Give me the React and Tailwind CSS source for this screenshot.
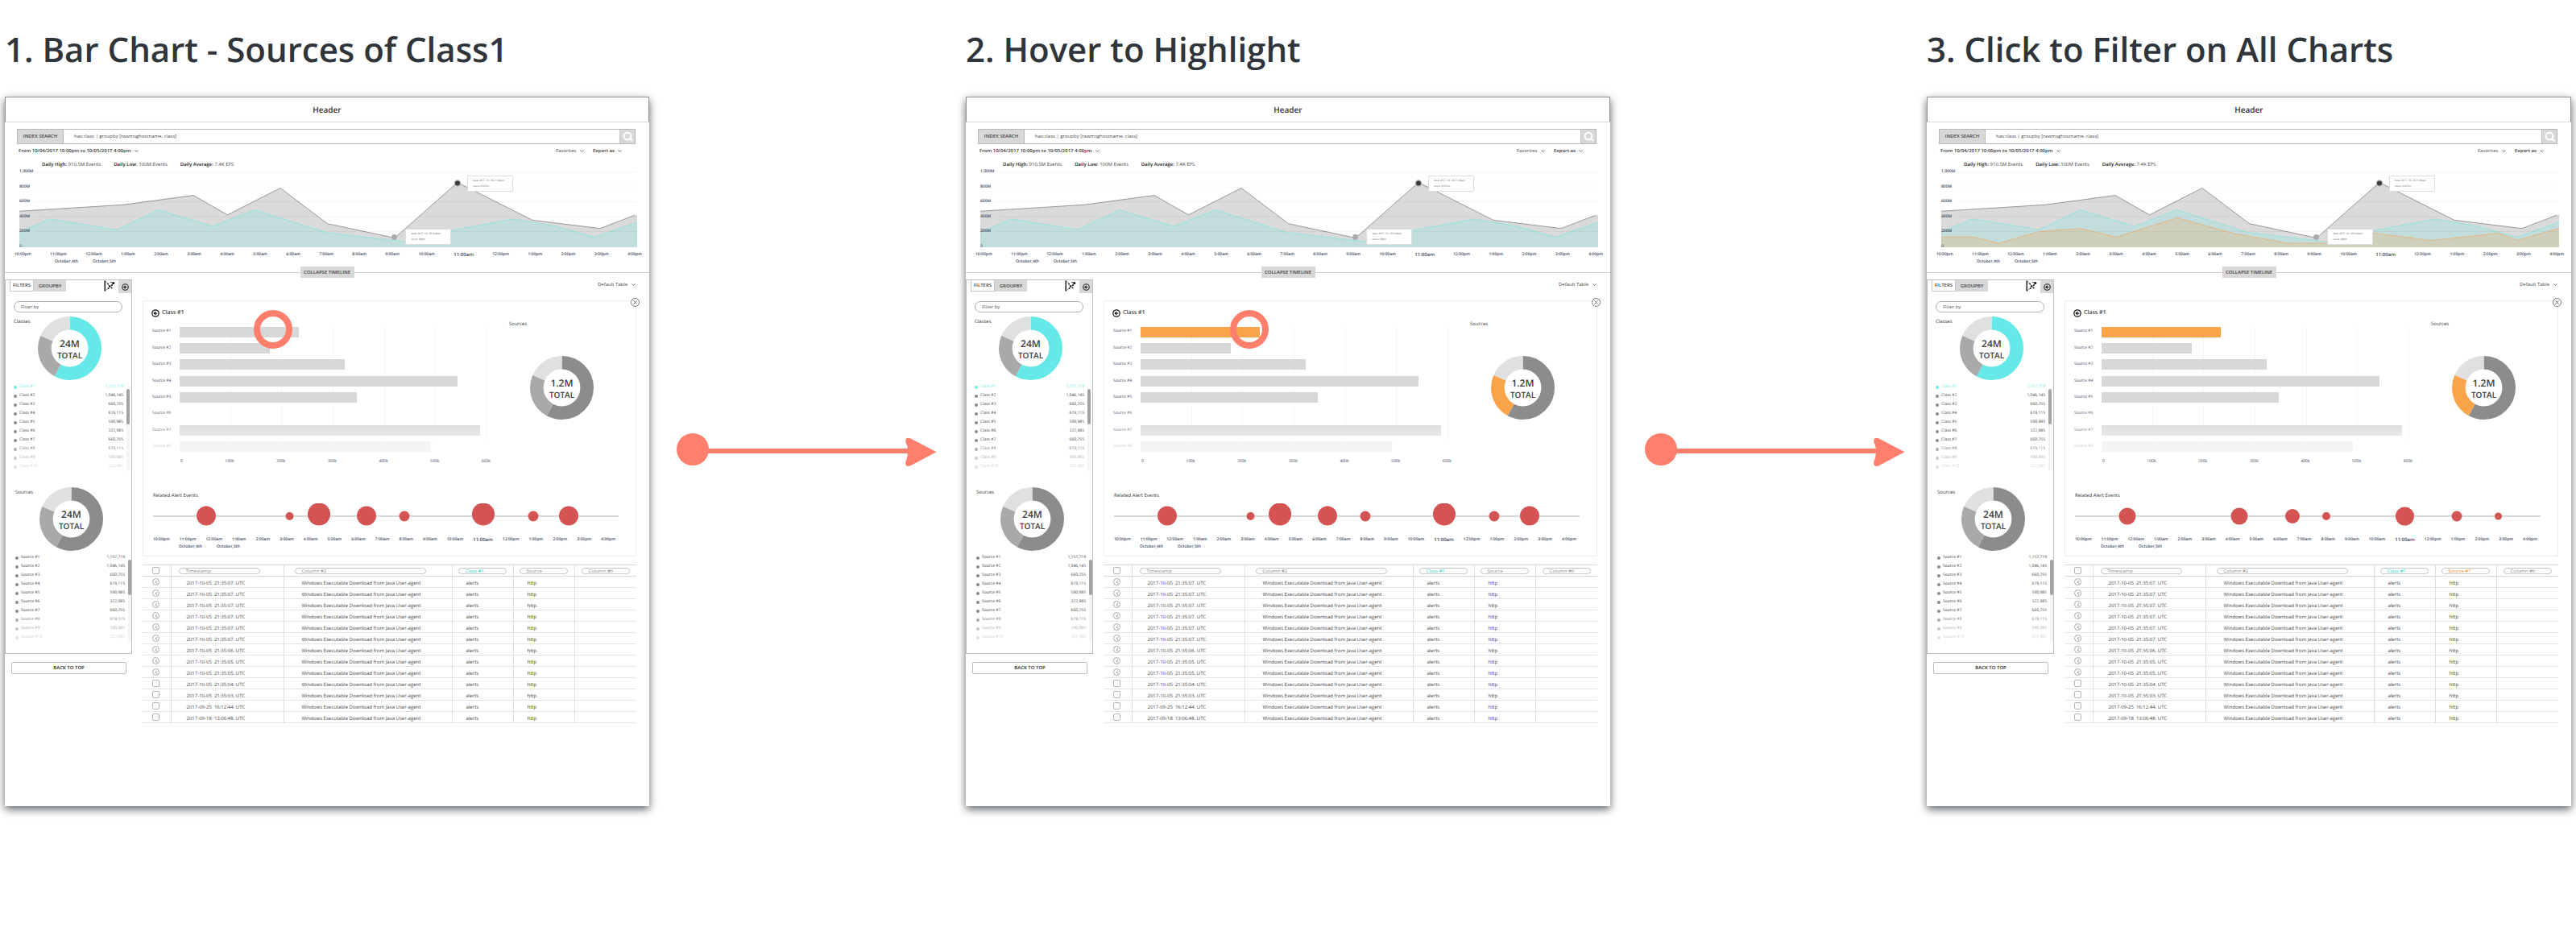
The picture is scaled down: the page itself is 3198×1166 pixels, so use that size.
import React from "react";
import { ChevronDown, ChevronLeft, CircleArrowLeft, Search, X } from "lucide-react";

const CYAN = "#64e9e8";
const ORANGE = "#f9a44a";

const HOURS = [
  "10:00pm", "11:00pm", "12:00am", "1:00am", "2:00am", "3:00am", "4:00am", "5:00am", "6:00am", "7:00am",
  "8:00am", "9:00am", "10:00am", "11:00am", "12:00pm", "1:00pm", "2:00pm", "3:00pm", "4:00pm",
];

const COUNTS = ["1,157,719", "1,046,145", "660,255", "619,115", "590,985", "322,985", "660,255", "619,115", "590,985", "322,985"];
const FADE = [1, 1, 1, 1, 1, 1, 1, 0.7, 0.45, 0.25];

const BARS = [
  { value: 148, color: "#d8d8d8", fade: 1 },
  { value: 112, color: "#d8d8d8", fade: 1 },
  { value: 205, color: "#d8d8d8", fade: 1 },
  { value: 345, color: "#d8d8d8", fade: 1 },
  { value: 220, color: "#d8d8d8", fade: 1 },
  { value: 0, color: "#d8d8d8", fade: 0.85 },
  { value: 373, color: "linear-gradient(#dfdfdf, #e9e9e9)", fade: 0.7 },
  { value: 312, color: "#f5f5f5", fade: 0.3 },
];
const BAR_MAX = 382;

const ALERTS = [
  [66, 15.5, 12], [169.5, 16, 5], [206, 13.5, 14], [265, 15.5, 12],
  [312, 16, 6.5], [410, 13.5, 14], [472, 16, 6.5], [516, 15.5, 12],
];
const FILTERED_ALERTS = [
  [65, 16, 10.5], [204, 16, 10.5], [270, 16, 9], [312, 16, 5], [409.5, 16, 11.5], [474, 16, 6.5], [525.5, 16, 4.5],
];

const ROWS = [
  ["2017-10-05", "21:35:07. UTC", true],
  ["2017-10-05", "21:35:07. UTC", true],
  ["2017-10-05", "21:35:07. UTC", true],
  ["2017-10-05", "21:35:07. UTC", true],
  ["2017-10-05", "21:35:07. UTC", true],
  ["2017-10-05", "21:35:07. UTC", true],
  ["2017-10-05", "21:35:06. UTC", true],
  ["2017-10-05", "21:35:05. UTC", true],
  ["2017-10-05", "21:35:05. UTC", true],
  ["2017-10-05", "21:35:04. UTC", false],
  ["2017-10-05", "21:35:03. UTC", false],
  ["2017-09-25", "16:12:44. UTC", false],
  ["2017-09-18", "13:06:48. UTC", false],
];

function Dropdown({ label, bold }) {
  return (
    <span className="relative inline-flex items-center">
      <select
        aria-label={label}
        className={
          "appearance-none bg-transparent pr-[10px] text-[6px] leading-[10px] outline-none " +
          (bold ? "font-semibold text-[#333]" : "text-[#444]")
        }
      >
        <option>{label}</option>
      </select>
      <ChevronDown className="pointer-events-none absolute right-0 size-[7px] text-[#555]" strokeWidth={3} />
    </span>
  );
}

function HourAxis() {
  return (
    <div className="flex h-[11px] items-center justify-between font-semibold text-[#3d475c]">
      {HOURS.map((h) => (
        <span key={h} className={h === "11:00am" ? "text-[6px]" : "text-[5px]"}>
          {h}
        </span>
      ))}
    </div>
  );
}

function DateAxis() {
  return (
    <div className="flex h-[8px] items-center gap-[18px] text-[5px] font-semibold text-[#3d475c]">
      <span>October,4th</span>
      <span>October,5th</span>
    </div>
  );
}

function Donut({ total, colors }) {
  const slices = [
    [0, 208.5, colors[0]],
    [208.5, 293.5, colors[1]],
    [293.5, 360, colors[2]],
  ];
  return (
    <div className="relative size-[79px] shrink-0">
      <svg viewBox="0 0 79 79" className="size-full -rotate-90">
        {slices.map(([from, to, color]) => (
          <circle
            key={from}
            cx="39.5"
            cy="39.5"
            r="31.2"
            fill="none"
            stroke={color}
            strokeWidth="16.6"
            pathLength="360"
            strokeDasharray={`${to - from} 360`}
            strokeDashoffset={-from}
          />
        ))}
      </svg>
      <div className="absolute inset-0 flex flex-col items-center justify-center pt-[1px] font-semibold text-[#3c3c3c]">
        <span className="text-[12px] leading-[15px]">{total}</span>
        <span className="text-[10px] leading-[14px]">TOTAL</span>
      </div>
    </div>
  );
}

function FacetList({ name, highlight }) {
  return (
    <div className="mt-[3px] flex justify-between">
      <ul className="flex-1 text-[5px] leading-[11px]">
        {COUNTS.map((count, i) => {
          const active = highlight && i === 0;
          return (
            <li
              key={i}
              style={{ opacity: FADE[i] }}
              className={"flex items-center " + (active ? "text-[#64e9e8]" : "text-[#3c3c3c]")}
            >
              <span className={"mr-[3px] size-[4px] rounded-full " + (active ? "bg-[#64e9e8]" : "bg-[#8a8a8a]")} />
              <span className="flex-1">{`${name} #${i + 1}`}</span>
              <span>{count}</span>
            </li>
          );
        })}
      </ul>
      <div className="mt-[8px] ml-[4px] w-[4px] rounded-full bg-[#f4f4f4]">
        <div className="h-[44px] rounded-full bg-[#a3a3a3]" />
      </div>
    </div>
  );
}

function FlowIcon() {
  return (
    <svg viewBox="0 0 14 14" className="size-[14px]" stroke="#111" fill="none">
      <path d="M1.2 .5v13" strokeWidth="1.4" />
      <path d="M1.5 1l3 2.6M1.5 13l3.600-2.600" strokeWidth=".5" />
      <path d="M5 4.5l2 3-1.500 2.500M7 7.500l3-1 1-3M7 7.500l2.500 2M9 2.500l2.500 1" strokeWidth=".6" />
      <g fill="#111" stroke="none">
        <circle cx="5" cy="4.400" r=".9" />
        <circle cx="7" cy="7.400" r="1.100" />
        <circle cx="5.600" cy="10.200" r=".9" />
        <circle cx="9.700" cy="9.400" r=".9" />
        <circle cx="9.800" cy="6.300" r="1" />
        <circle cx="8.800" cy="2.600" r=".7" />
        <circle cx="11.800" cy="3.600" r="1.500" />
      </g>
    </svg>
  );
}

function Sidebar() {
  return (
    <aside className="w-[158px] shrink-0">
      <div className="border border-[#bdbdbd] pb-[14px]">
        <div className="flex h-[16px] items-start pl-[5px] text-[6px] font-semibold text-[#3c3c3c]">
          <button className="h-[14px] w-[30px] border border-t-0 border-[#c4c4c4] bg-white">FILTERS</button>
          <button className="h-[14px] w-[40px] bg-[#d8d8d8]">GROUPBY</button>
          <button className="ml-auto" aria-label="Flow view">
            <FlowIcon />
          </button>
          <button className="ml-[4px] flex h-[16px] w-[16px] items-center justify-center bg-[#d8d8d8]" aria-label="Collapse sidebar">
            <CircleArrowLeft className="size-[9px] text-[#222]" strokeWidth={3} />
          </button>
        </div>
        <input
          aria-label="Filter groups"
          placeholder="Fliter by"
          className="mt-[10px] ml-[10px] block h-[14px] w-[135px] rounded-full border border-[#b0b0b0] px-[8px] text-[6px] outline-none placeholder:text-[#555]"
        />
        <div className="mt-[5px] flex pl-[10px]">
          <h3 className="w-[30px] text-[6px] leading-[12px] font-medium text-[#333]">Classes</h3>
          <Donut total="24M" colors={[CYAN, "#a9a9a9", "#e0e0e0"]} />
        </div>
        <div className="pr-[2px] pl-[10px]">
          <FacetList name="Class" highlight />
        </div>
        <div className="mt-[20px] flex pl-[12px]">
          <h3 className="w-[30px] text-[6px] leading-[12px] font-medium text-[#333]">Sources</h3>
          <Donut total="24M" colors={["#8c8c8c", "#a9a9a9", "#e0e0e0"]} />
        </div>
        <div className="pl-[12px]">
          <FacetList name="Source" />
        </div>
      </div>
      <button className="mt-[10px] ml-[8px] block h-[15px] w-[143px] rounded-[2px] border border-[#bdbdbd] text-[6px] font-semibold text-[#222]">
        BACK TO TOP
      </button>
    </aside>
  );
}

function ChartTip({ date, count, place }) {
  return (
    <div className={"absolute h-[20px] w-[57px] rounded-[1px] border border-[#dedede] bg-white pt-[2px] pl-[6px] text-[3px] leading-[7px] whitespace-nowrap text-[#555] " + place}>
      <p>{date}</p>
      <p>{count}</p>
    </div>
  );
}

function EventTimeline({ filtered }) {
  return (
    <div className="pr-[9px] pl-[12px]">
      <div className="relative mr-[6px] ml-[6px]">
        <svg viewBox="24 213 767 94" className="block w-full">
          <path d="M24 262.3L153 254.3L240 242.6L282.5 266.8L348 233.5L406.5 277.7L490 295.5L568 226.5L661 273.4L745 283.7L791 266.5V307H24Z" fill="#dadada" />
          <path d="M24 262.3L153 254.3L240 242.6L282.5 266.8L348 233.5L406.5 277.7L490 295.5L568 226.5L661 273.4L745 283.7L788 267.2" fill="none" stroke="#8f8f8f" strokeWidth=".9" />
          <path d="M24 289L36 283L62.5 271.9L145 285.3L196.5 260.7L264 281L316 260.7L405 288.7L505 300.5L557 287L637 272L690 281L738 294.6L791 276V307H24Z" fill={CYAN} fillOpacity=".2" />
          <path d="M24 289L36 283L62.5 271.9L145 285.3L196.5 260.7L264 281L316 260.7L405 288.7L505 300.5L557 287L637 272L690 281L738 294.6L791 276" fill="none" stroke="#8fe3e0" strokeWidth=".9" />
          {filtered && (
            <g>
              <path d="M24 294.3H63L96 302L146 287.5L197 283.7L241 294.5L317 270.5L385 289.5L454 302H509L561 289.5L632 298.7L716 289.5L739 298.5L791 283.5V307H24Z" fill={ORANGE} fillOpacity=".22" />
              <path d="M24 294.3H63L96 302L146 287.5L197 283.7L241 294.5L317 270.5L385 289.5L454 302H509L561 289.5L632 298.7L716 289.5L739 298.5L791 283.5" fill="none" stroke="#e8b27c" strokeWidth=".9" />
            </g>
          )}
          <path d="M42 213.5H791M42 232H791M42 250.5H791M42 269H791M42 287.5H791" stroke="#000" strokeOpacity=".04" strokeWidth="1" />
          <circle cx="568" cy="227.5" r="4.2" fill="#bbb" />
          <circle cx="568" cy="227.5" r="3" fill="#3d3d3d" />
          <circle cx="489.5" cy="294.5" r="3.4" fill="#ababab" />
        </svg>
        <div className="absolute -top-[4px] left-0 flex h-[101px] flex-col justify-between text-[5px] leading-[8px] font-semibold text-[#3d475c]">
          <span>1,000M</span>
          <span>800M</span>
          <span>600M</span>
          <span>400M</span>
          <span>200M</span>
          <span className="font-normal">0</span>
        </div>
        <ChartTip date="date:  2017- 10 - 05 11:00am" count="count: 910.5m" place="left-[72.5%] top-[5px]" />
        <ChartTip date="date:  2017- 10 - 05 9:00am" count="count:  600m" place="left-[62.5%] top-[71px]" />
      </div>
      <div className="mt-[4px]">
        <HourAxis />
      </div>
      <div className="pl-[50px]">
        <DateAxis />
      </div>
    </div>
  );
}

function BarChart({ highlighted, ring }) {
  return (
    <div className="min-w-0 flex-1 pl-[11px]">
      <div className="flex">
        <div className="mt-[7px] grid h-[163px] w-[34px] grid-rows-8 items-center text-[5px] text-[#3d475c]">
          {BARS.map((b, i) => (
            <span key={i} style={{ opacity: b.fade }}>{`Source #${i + 1}`}</span>
          ))}
        </div>
        <div className="relative mt-[7px] flex h-[163px] flex-1">
          <div className="absolute inset-x-0 top-[4px] flex h-[142px]">
            {[1, 2, 3, 4, 5, 6].map((n) => (
              <div key={n} className="flex-1 border-r border-[#f6f6f6]" />
            ))}
          </div>
          <div className="relative grid flex-1 grid-rows-8 items-center">
            {BARS.map((b, i) => (
              <div
                key={i}
                className="h-[13px]"
                style={{ width: `${(b.value / BAR_MAX) * 100}%`, background: i === 0 && highlighted ? ORANGE : b.color }}
              />
            ))}
          </div>
          {ring && <div className={"absolute -top-[17px] size-[48px] rounded-full border-[8px] border-[#ff7f6c] " + ring} />}
        </div>
      </div>
      <div className="mt-[3px] -mr-[4px] ml-[35px] flex h-[11px] items-center justify-between text-[5px] text-[#3d475c]">
        {["0", "100k", "200k", "300k", "400k", "500k", "600k"].map((t) => (
          <span key={t}>{t}</span>
        ))}
      </div>
    </div>
  );
}

function DetailPanel({ highlighted, filtered, ring }) {
  return (
    <section className="relative rounded-[1px] border border-[#ebebeb] pt-[9px] pb-[6px]">
      <button
        className="absolute -top-[4px] -right-[5px] flex size-[11px] items-center justify-center rounded-full border border-[#777] bg-white text-[#555]"
        aria-label="Close"
      >
        <X className="size-[7px]" strokeWidth={3} />
      </button>
      <h2 className="flex h-[12px] items-center gap-[3px] pl-[10px] text-[7px] font-semibold text-[#3c3c3c]">
        <CircleArrowLeft className="size-[10px] text-[#111]" strokeWidth={3} />
        Class #1
      </h2>
      <div className="flex gap-[27px]">
        <BarChart highlighted={highlighted} ring={ring} />
        <div className="w-[157px] shrink-0 pt-[2px]">
          <h3 className="text-[6px] leading-[10px] text-[#333]">Sources</h3>
          <div className="mt-[35px] ml-[26px]">
            <Donut total="1.2M" colors={["#8c8c8c", highlighted ? ORANGE : "#a9a9a9", "#e0e0e0"]} />
          </div>
        </div>
      </div>
      <div className="mt-[31px] pr-[21px] pl-[12px]">
        <h3 className="text-[6px] leading-[11px] text-[#333]">Related Alert Events</h3>
        <svg viewBox="0 0 578 32" className="mt-[4px] block w-full">
          <path d="M0 16H578" stroke="#d8d8d8" strokeWidth="2" />
          {(filtered ? FILTERED_ALERTS : ALERTS).map(([x, y, r]) => (
            <circle key={x} cx={x} cy={y} r={r} fill="#d45454" />
          ))}
        </svg>
        <div className="mt-[8px] mr-[4px]">
          <HourAxis />
        </div>
        <div className="pl-[32px]">
          <DateAxis />
        </div>
      </div>
    </section>
  );
}

function Tick({ label }) {
  return (
    <input
      type="checkbox"
      aria-label={label}
      className="block size-[9px] appearance-none rounded-[2px] border border-[#b5b5b5] bg-white checked:bg-[#b5b5b5]"
    />
  );
}

function EventTable({ filtered }) {
  const cell = "border-l border-[#dedede] pt-[2px]";
  const pill = "block h-[8px] rounded-full border border-[#c6c6c6] pl-[8px] text-left text-[6px] leading-[6px] font-normal ";
  return (
    <table className="mt-[10px] w-full table-fixed border-collapse text-[6px] leading-[8px] text-[#444]">
      <colgroup>
        <col className="w-[35px]" />
        <col className="w-[140px]" />
        <col />
        <col className="w-[76px]" />
        <col className="w-[76px]" />
        <col className="w-[77px]" />
      </colgroup>
      <thead>
        <tr className="h-[14px] border-y border-[#d8d8d8]">
          <th className="pl-[12px]">
            <Tick label="Select all rows" />
          </th>
          <th className="border-l border-[#dedede] pl-[9px]">
            <button className={pill + "w-[101px] text-[#888]"}>Timestamp</button>
          </th>
          <th className="border-l border-[#dedede] pl-[13px]">
            <button className={pill + "w-[163px] text-[#888]"}>Column #2</button>
          </th>
          <th className="border-l border-[#dedede] pl-[7px]">
            <button className={pill + "w-[60px] text-[#22d3cf]"}>Class #1</button>
          </th>
          <th className="border-l border-[#dedede] pl-[7px]">
            <button className={pill + "w-[60px] " + (filtered ? "text-[#f5861a]" : "text-[#888]")}>
              {filtered ? "Source #1" : "Source"}
            </button>
          </th>
          <th className="border-l border-[#dedede] pl-[8px]">
            <button className={pill + "w-[60px] text-[#888]"}>Column #6</button>
          </th>
        </tr>
      </thead>
      <tbody>
        {ROWS.map(([day, time, open], i) => (
          <tr key={i} className="h-[14px] border-b border-[#e4e4e4]">
            <td className="pl-[12px]">
              {open ? (
                <button
                  aria-label={`Open row ${i + 1}`}
                  className="flex size-[9px] items-center justify-center rounded-full border border-[#aaa] text-[#555]"
                >
                  <ChevronLeft className="size-[6px]" strokeWidth={3} />
                </button>
              ) : (
                <Tick label={`Select row ${i + 1}`} />
              )}
            </td>
            <td className={cell + " pl-[19px] whitespace-pre"}>{`${day}  ${time}`}</td>
            <td className={cell + " pl-[22px] whitespace-nowrap"}>Windows Executable Download from Java User-agent</td>
            <td className={cell + " pl-[17px]"}>alerts</td>
            <td className={cell + " pl-[17px]"}>http</td>
            <td className={cell} />
          </tr>
        ))}
      </tbody>
    </table>
  );
}

function Screen({ highlighted, filtered, ring }) {
  return (
    <article className="bg-white pb-[103px] shadow-[0_4px_10px_rgba(47,53,58,0.75)]">
      <header className="flex h-[32px] items-center justify-center border border-[#8f8f8f] border-b-[#d8d8d8] text-[10px] font-semibold text-[#333]">
        Header
      </header>
      <form className="mt-[8px] mr-[17px] ml-[15px] flex h-[19px] border border-[#b8b8b8]" onSubmit={(e) => e.preventDefault()}>
        <button type="button" className="w-[57px] border-r border-[#b8b8b8] bg-[#d8d8d8] text-[6px] font-semibold text-[#3c3c3c]">
          INDEX SEARCH
        </button>
        <input
          aria-label="Search query"
          defaultValue="has:class | groupby [rawmsghostname, class]"
          className="min-w-0 flex-1 pl-[13px] text-[6px] text-[#444] outline-none"
        />
        <button className="flex w-[19px] items-center justify-center border-l border-[#c4c4c4] bg-[#d8d8d8] text-white" aria-label="Search">
          <Search className="size-[13px]" strokeWidth={4} />
        </button>
      </form>
      <div className="mr-[33px] ml-[17px] flex h-[16px] items-center">
        <Dropdown label="From 10/04/2017 10:00pm to 10/05/2017 4:00pm" bold />
        <div className="ml-auto flex gap-[10px]">
          <Dropdown label="Favorites" />
          <Dropdown label="Export as" bold />
        </div>
      </div>
      <div className="ml-[46px] flex h-[18px] items-center gap-[16px] text-[6px] text-[#444]">
        <p><b className="font-semibold text-[#222]">Daily High:</b> 910.5M Events</p>
        <p><b className="font-semibold text-[#222]">Daily Low:</b> 100M Events</p>
        <p><b className="font-semibold text-[#222]">Daily Average:</b> 7.4K EPS</p>
      </div>
      <EventTimeline filtered={filtered} />
      <div className="mt-[1px] flex items-center">
        <div className="h-px flex-1 bg-[#cfcfcf]" />
        <button className="h-[14px] w-[67px] bg-[#d8d8d8] text-[6px] font-semibold text-[#3c3c3c]">COLLAPSE TIMELINE</button>
        <div className="h-px flex-1 bg-[#cfcfcf]" />
      </div>
      <div className="mt-[2px] flex">
        <Sidebar />
        <main className="mr-[16px] ml-[13px] min-w-0 flex-1">
          <div className="mb-[14px] flex h-[12px] items-center justify-end">
            <Dropdown label="Default Table" />
          </div>
          <DetailPanel highlighted={highlighted} filtered={filtered} ring={ring} />
          <EventTable filtered={filtered} />
        </main>
      </div>
    </article>
  );
}

function Step({ title, children }) {
  return (
    <section className="min-w-0 flex-1">
      <h1 className="flex h-[120px] items-center pt-[2px] text-[42px] font-semibold whitespace-nowrap text-[#2f353a]">{title}</h1>
      {children}
    </section>
  );
}

function Arrow({ inset }) {
  return (
    <div className={"flex w-[393px] shrink-0 items-start pt-[538px] " + inset}>
      <svg viewBox="0 0 322 42" className="w-[322px]" fill="#ff7f6c">
        <circle cx="20" cy="20" r="20" />
        <path d="M38 19H287V25H38Z" />
        <path d="M322.500 23.300L290.500 40.200C286.500 41.800 284 40.500 284.200 36.500C284.500 33 286.500 32 286.800 25V19C286.500 14 284.500 13 284.200 10C284 6 286.500 5 290.500 6.500Z" />
      </svg>
    </div>
  );
}

export default function App() {
  return (
    <div className="flex bg-white px-[6px] pb-[166px] font-['Open_Sans','Noto_Sans',sans-serif] [text-rendering:geometricPrecision]">
      <Step title="1. Bar Chart - Sources of Class1">
        <Screen ring="left-[24%]" />
      </Step>
      <Arrow inset="pl-[34px]" />
      <Step title="2. Hover to Highlight">
        <Screen highlighted ring="left-[29%]" />
      </Step>
      <Arrow inset="pl-[43px]" />
      <Step title="3. Click to Filter on All Charts">
        <Screen highlighted filtered />
      </Step>
    </div>
  );
}
